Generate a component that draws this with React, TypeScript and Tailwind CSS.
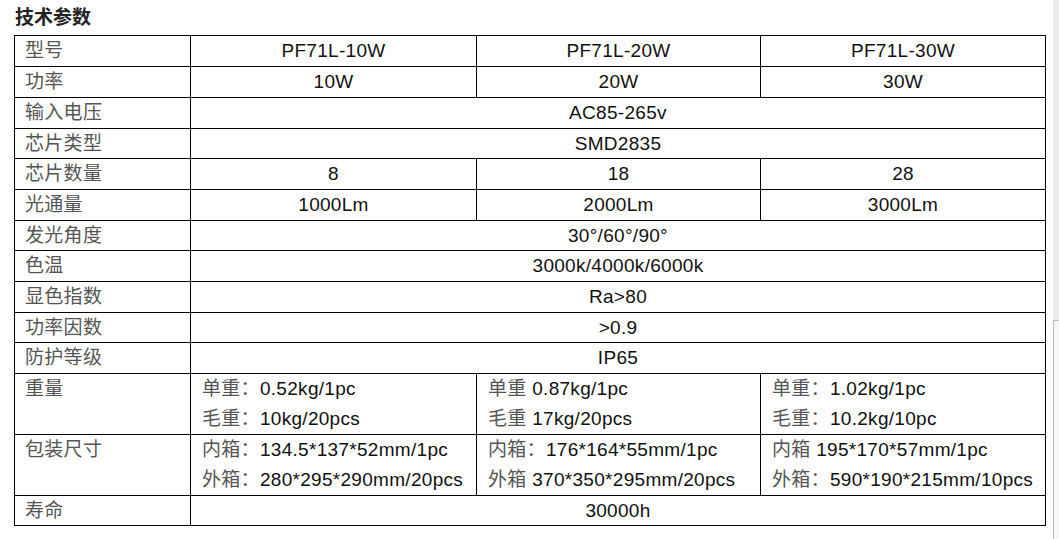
const font = "font-['Liberation_Sans','Noto_Sans_CJK_SC',sans-serif]";

type Row = {
  label: string;
  h: string;
  cells: string[][]; // one entry = spans all three columns
};

const rows: Row[] = [
  { label: "型号", h: "h-[31px]", cells: [["PF71L-10W"], ["PF71L-20W"], ["PF71L-30W"]] },
  { label: "功率", h: "h-[31px]", cells: [["10W"], ["20W"], ["30W"]] },
  { label: "输入电压", h: "h-[31px]", cells: [["AC85-265v"]] },
  { label: "芯片类型", h: "h-[30px]", cells: [["SMD2835"]] },
  { label: "芯片数量", h: "h-[31px]", cells: [["8"], ["18"], ["28"]] },
  { label: "光通量", h: "h-[31px]", cells: [["1000Lm"], ["2000Lm"], ["3000Lm"]] },
  { label: "发光角度", h: "h-[30px]", cells: [["30°/60°/90°"]] },
  { label: "色温", h: "h-[31px]", cells: [["3000k/4000k/6000k"]] },
  { label: "显色指数", h: "h-[31px]", cells: [["Ra>80"]] },
  { label: "功率因数", h: "h-[30px]", cells: [[">0.9"]] },
  { label: "防护等级", h: "h-[31px]", cells: [["IP65"]] },
  {
    label: "重量",
    h: "h-[61px]",
    cells: [
      ["单重：|0.52kg/1pc", "毛重：|10kg/20pcs"],
      ["单重 |0.87kg/1pc", "毛重 |17kg/20pcs"],
      ["单重：|1.02kg/1pc", "毛重：|10.2kg/10pc"],
    ],
  },
  {
    label: "包装尺寸",
    h: "h-[61px]",
    cells: [
      ["内箱：|134.5*137*52mm/1pc", "外箱：|280*295*290mm/20pcs"],
      ["内箱：|176*164*55mm/1pc", "外箱 |370*350*295mm/20pcs"],
      ["内箱 |195*170*57mm/1pc", "外箱：|590*190*215mm/10pcs"],
    ],
  },
  { label: "寿命", h: "h-[30px]", cells: [["30000h"]] },
];

function Line({ text }: { text: string }) {
  const [cn, val] = text.split("|");
  return (
    <div>
      <span className="text-[#555]">{cn}</span>
      {val}
    </div>
  );
}

export default function App() {
  return (
    <div className={`flex h-[539px] w-[1059px] bg-white overflow-hidden ${font}`}>
      <div className="w-[1053px]">
        <h2 className="h-[35px] pl-[15px] pt-[6px] text-[19px] leading-[24px] font-bold text-[#222]">
          技术参数
        </h2>
        <table className="ml-[14px] w-[1031px] table-fixed border-collapse text-[19px] tracking-[0.3px] text-[#111]">
          <colgroup>
            <col className="w-[176px]" />
            <col className="w-[286px]" />
            <col className="w-[284px]" />
            <col className="w-[285px]" />
          </colgroup>
          <tbody>
            {rows.map((row) => {
              const double = row.cells[0].length > 1;
              return (
                <tr key={row.label} className={row.h}>
                  <td
                    className={`border border-black py-0 pl-[10px] text-[#555] ${
                      double ? "align-top leading-[30px]" : "align-middle leading-[28px]"
                    }`}
                  >
                    {row.label}
                  </td>
                  {row.cells.length === 1 ? (
                    <td colSpan={3} className="border border-black p-0 text-center leading-[28px] whitespace-nowrap">
                      {row.cells[0][0]}
                    </td>
                  ) : double ? (
                    row.cells.map((lines, i) => (
                      <td key={i} className="border border-black py-0 px-[11px] text-left leading-[30px] whitespace-nowrap">
                        {lines.map((l) => (
                          <Line key={l} text={l} />
                        ))}
                      </td>
                    ))
                  ) : (
                    row.cells.map((lines, i) => (
                      <td key={i} className="border border-black p-0 text-center leading-[28px] whitespace-nowrap">
                        {lines[0]}
                      </td>
                    ))
                  )}
                </tr>
              );
            })}
          </tbody>
        </table>
      </div>
      <div className="flex w-[6px] flex-col bg-[#ededed]">
        <div className="h-[320px]" />
        <div className="flex-1 border-t border-l border-[#bdbdbd] bg-[#f6f6f6]" />
      </div>
    </div>
  );
}
